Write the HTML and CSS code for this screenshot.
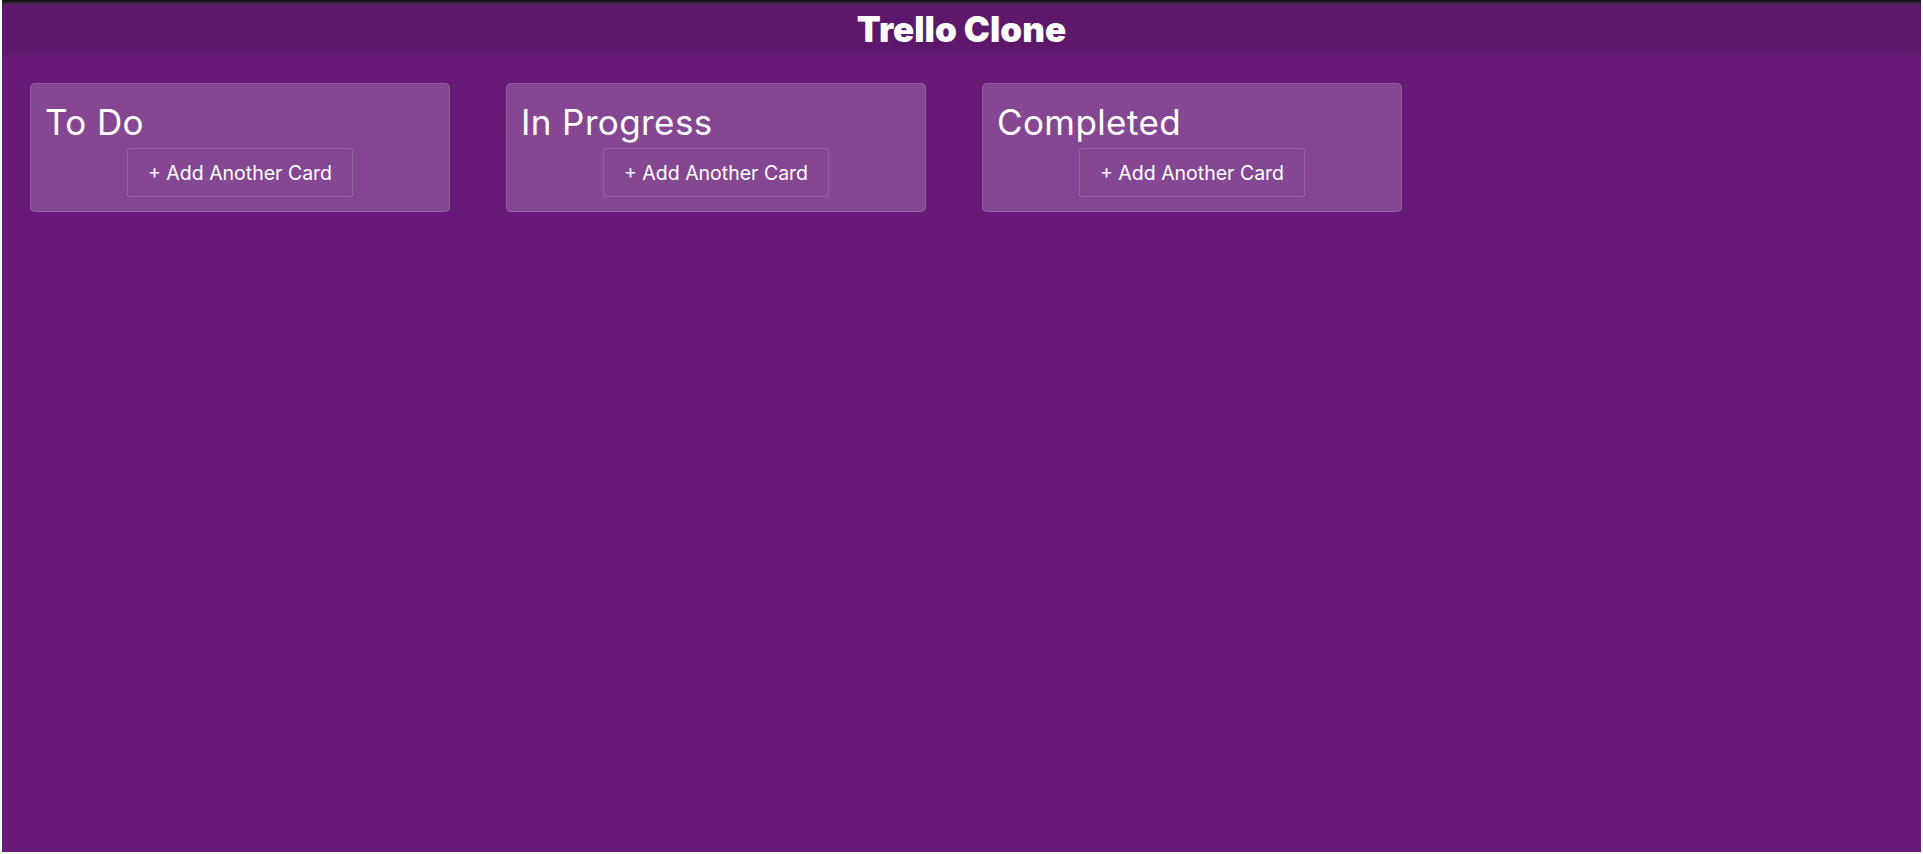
FILE: index.html
```html
<!DOCTYPE html>
<html lang="en">
<head>
<meta charset="utf-8">
<title>Trello Clone</title>
<link rel="stylesheet" href="styles.css">
</head>
<body>
<div class="frame">
  <header class="topbar">
    <h1 class="brand">Trello Clone</h1>
  </header>
  <main class="board">
    <section class="list">
      <h2 class="list-title">To Do</h2>
      <button class="add-card">+ Add Another Card</button>
    </section>
    <section class="list">
      <h2 class="list-title">In Progress</h2>
      <button class="add-card">+ Add Another Card</button>
    </section>
    <section class="list">
      <h2 class="list-title">Completed</h2>
      <button class="add-card">+ Add Another Card</button>
    </section>
  </main>
</div>
</body>
</html>
```

FILE: styles.css
```css
html, body {
  margin: 0;
  padding: 0;
  height: 100%;
  background: #ffffff;
}

body {
  font-family: "Inter", "Open Sans", sans-serif;
  color: #ffffff;
  padding: 0 2px 2px 2px;
  box-sizing: border-box;
}

.frame {
  height: 100%;
  display: flex;
  flex-direction: column;
  background: #671a77;
  border-top: 2px solid #141414;
  box-sizing: border-box;
}

.topbar {
  background: #5d176b;
  border-top: 2px solid #38263b;
  height: 51px;
  display: flex;
  align-items: center;
  justify-content: center;
}

.brand {
  margin: 0;
  font-size: 35px;
  font-weight: 900;
  letter-spacing: 0;
  line-height: 1;
}

.board {
  display: flex;
  align-items: flex-start;
  gap: 56px;
  padding: 28px 28px;
}

.list {
  width: 420px;
  box-sizing: border-box;
  background: rgba(255, 255, 255, 0.2);
  border: 1px solid rgba(255, 255, 255, 0.15);
  border-radius: 5px;
  padding: 16px 14px 14px;
  display: flex;
  flex-direction: column;
  align-items: center;
}

.list-title {
  align-self: stretch;
  margin: 0 0 4px;
  font-size: 35px;
  font-weight: 400;
  letter-spacing: 0.4px;
  line-height: 44px;
}

.add-card {
  font-family: inherit;
  font-size: 19.5px;
  color: #ffffff;
  background: transparent;
  border: 1px solid rgba(255, 255, 255, 0.15);
  border-radius: 2px;
  width: 226px;
  height: 49px;
  padding: 0;
  cursor: pointer;
}
```
